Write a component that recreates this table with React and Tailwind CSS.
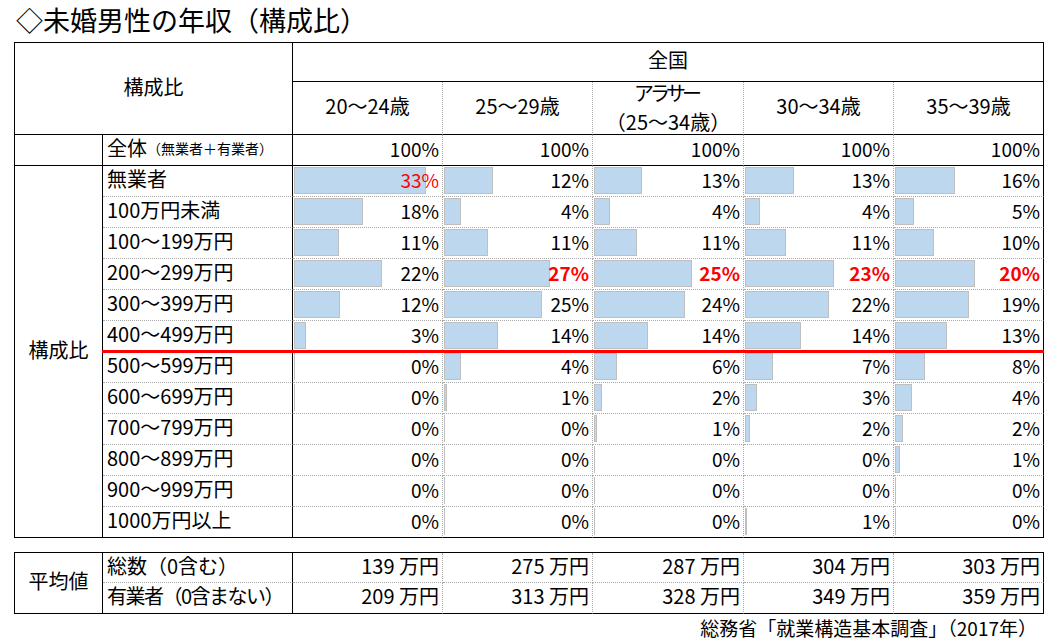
import { Fragment } from "react";

// borders: solid black / dotted gray, one side each
const bR = "[border-right:1px_solid_#000]";
const bB = "[border-bottom:1px_solid_#000]";
const dR = "[border-right:1px_dotted_#a9a9a9]";
const dB = "[border-bottom:1px_dotted_#a9a9a9]";

const heads = ["20～24歳", "25～29歳", null, "30～34歳", "35～39歳"];

// label, values (%), bar widths (px)
const rows = [
  ["無業者", [33, 12, 13, 13, 16], [132, 49, 48, 49, 60]],
  ["100万円未満", [18, 4, 4, 4, 5], [69, 17, 16, 15, 19]],
  ["100～199万円", [11, 11, 11, 11, 10], [45, 44, 43, 41, 39]],
  ["200～299万円", [22, 27, 25, 23, 20], [88, 106, 98, 89, 80]],
  ["300～399万円", [12, 25, 24, 22, 19], [46, 98, 91, 84, 74]],
  ["400～499万円", [3, 14, 14, 14, 13], [12, 54, 54, 56, 52]],
  ["500～599万円", [0, 4, 6, 7, 8], [1, 17, 23, 28, 30]],
  ["600～699万円", [0, 1, 2, 3, 4], [1, 3, 8, 12, 17]],
  ["700～799万円", [0, 0, 1, 2, 2], [0, 1, 3, 5, 8]],
  ["800～899万円", [0, 0, 0, 0, 1], [0, 1, 1, 0, 5]],
  ["900～999万円", [0, 0, 0, 0, 0], [0, 1, 1, 0, 1]],
  ["1000万円以上", [0, 0, 0, 1, 0], [0, 1, 1, 2, 1]],
];

const avg = [
  ["総数（0含む）", ["139", "275", "287", "304", "303"]],
  ["有業者（0含まない）", ["209", "313", "328", "349", "359"]],
];

function Bar({ w }) {
  if (!w) return null;
  if (w <= 2)
    return (
      <div
        className="col-start-1 row-start-1 justify-self-start mt-[1px] mb-[2px] bg-[#bfbfbf]"
        style={{ width: w }}
      />
    );
  return (
    <div
      className="col-start-1 row-start-1 justify-self-start mt-[1px] mb-[2px] border border-[#bfbfbf] bg-[#bdd7ee]"
      style={{ width: w }}
    />
  );
}

function valueClass(i, j) {
  if (i === 0 && j === 0) return "text-[#ff0000]";
  if (i === 3 && j > 0) return "text-[#ff0000] font-bold";
  return "text-black";
}

export default function App() {
  return (
    <div className="w-[1049px] h-[644px] overflow-hidden bg-white text-black [font-family:'Noto_Sans_CJK_JP',sans-serif]">
      <div className="h-[42px] flex items-center pl-[16px] pb-[3px] text-[27px] leading-none">
        ◇未婚男性の年収（構成比）
      </div>

      <div className="relative ml-[14px] w-fit">
        <div className="grid grid-cols-[88px_190px_150px_150px_151px_150px_150px] grid-rows-[39px_53px_31px_repeat(12,31px)] border-l border-t border-black text-[20px] leading-none">
          <div className={`col-span-2 row-span-2 ${bR} ${bB} flex items-center justify-center pb-[4px]`}>構成比</div>
          <div className={`col-span-5 ${bR} ${bB} flex items-center justify-center pb-[4px]`}>全国</div>
          {heads.map((h, j) => (
            <div key={j} className={`${j === 4 ? bR : dR} ${bB} flex flex-col items-center justify-center pb-[4px]`}>
              {h ? (
                h
              ) : (
                <>
                  <span className="leading-[29px] pt-[2px] tracking-[-4px] pr-[4px]">アラサー</span>
                  <span className="leading-[29px]">（25～34歳）</span>
                </>
              )}
            </div>
          ))}

          <div className={`${bR} ${bB}`} />
          <div className={`${bR} ${bB} flex items-center pl-[4px] pb-[4px]`}>
            <span>全体</span>
            <span className="text-[14px]">（無業者＋有業者）</span>
          </div>
          {heads.map((_, j) => (
            <div key={j} className={`${j === 4 ? bR : dR} ${bB} flex items-center justify-end pr-[3px] pb-[4px] text-[19px]`}>
              100%
            </div>
          ))}

          <div className={`row-span-12 ${bR} ${bB} flex items-center justify-center pb-[4px]`}>構成比</div>
          {rows.map((r, i) => {
            const lastRow = i === rows.length - 1;
            return (
              <Fragment key={i}>
                <div className={`${bR} ${lastRow ? bB : dB} flex items-center pl-[4px] pb-[4px]`}>{r[0]}</div>
                {r[1].map((v, j) => (
                  <div key={j} className={`${j === 4 ? bR : dR} ${lastRow ? bB : dB} grid pl-[1px] pr-[3px] text-[19px]`}>
                    <Bar w={r[2][j]} />
                    <span className={`col-start-1 row-start-1 self-center justify-self-end mb-[4px] ${valueClass(i, j)}`}>
                      {v}%
                    </span>
                  </div>
                ))}
              </Fragment>
            );
          })}
        </div>
        {/* red separator line drawn over the sheet */}
        <div className="absolute left-[88px] top-[308px] h-[3px] w-[942px] bg-[#ff0000]" />
      </div>

      <div className="mt-[14px] ml-[14px] w-fit grid grid-cols-[88px_190px_150px_150px_151px_150px_150px] grid-rows-[30px_31px] border-l border-t border-black text-[20px] leading-none">
        <div className={`row-span-2 ${bR} ${bB} flex items-center justify-center pb-[4px]`}>平均値</div>
        {avg.map((r, i) => (
          <Fragment key={i}>
            <div className={`${bR} ${i === 1 ? bB : dB} flex items-center pl-[4px] pb-[4px] ${i === 1 ? "tracking-[-1.5px]" : ""}`}>
              {r[0]}
            </div>
            {r[1].map((v, j) => (
              <div key={j} className={`${j === 4 ? bR : dR} ${i === 1 ? bB : dB} flex items-center justify-end pr-[3px] pb-[4px]`}>
                {v} 万円
              </div>
            ))}
          </Fragment>
        ))}
      </div>

      <div className="h-[31px] flex items-center justify-end pr-[12px] pb-[4px] text-[19px] leading-none">
        総務省「就業構造基本調査」（2017年）
      </div>
    </div>
  );
}
